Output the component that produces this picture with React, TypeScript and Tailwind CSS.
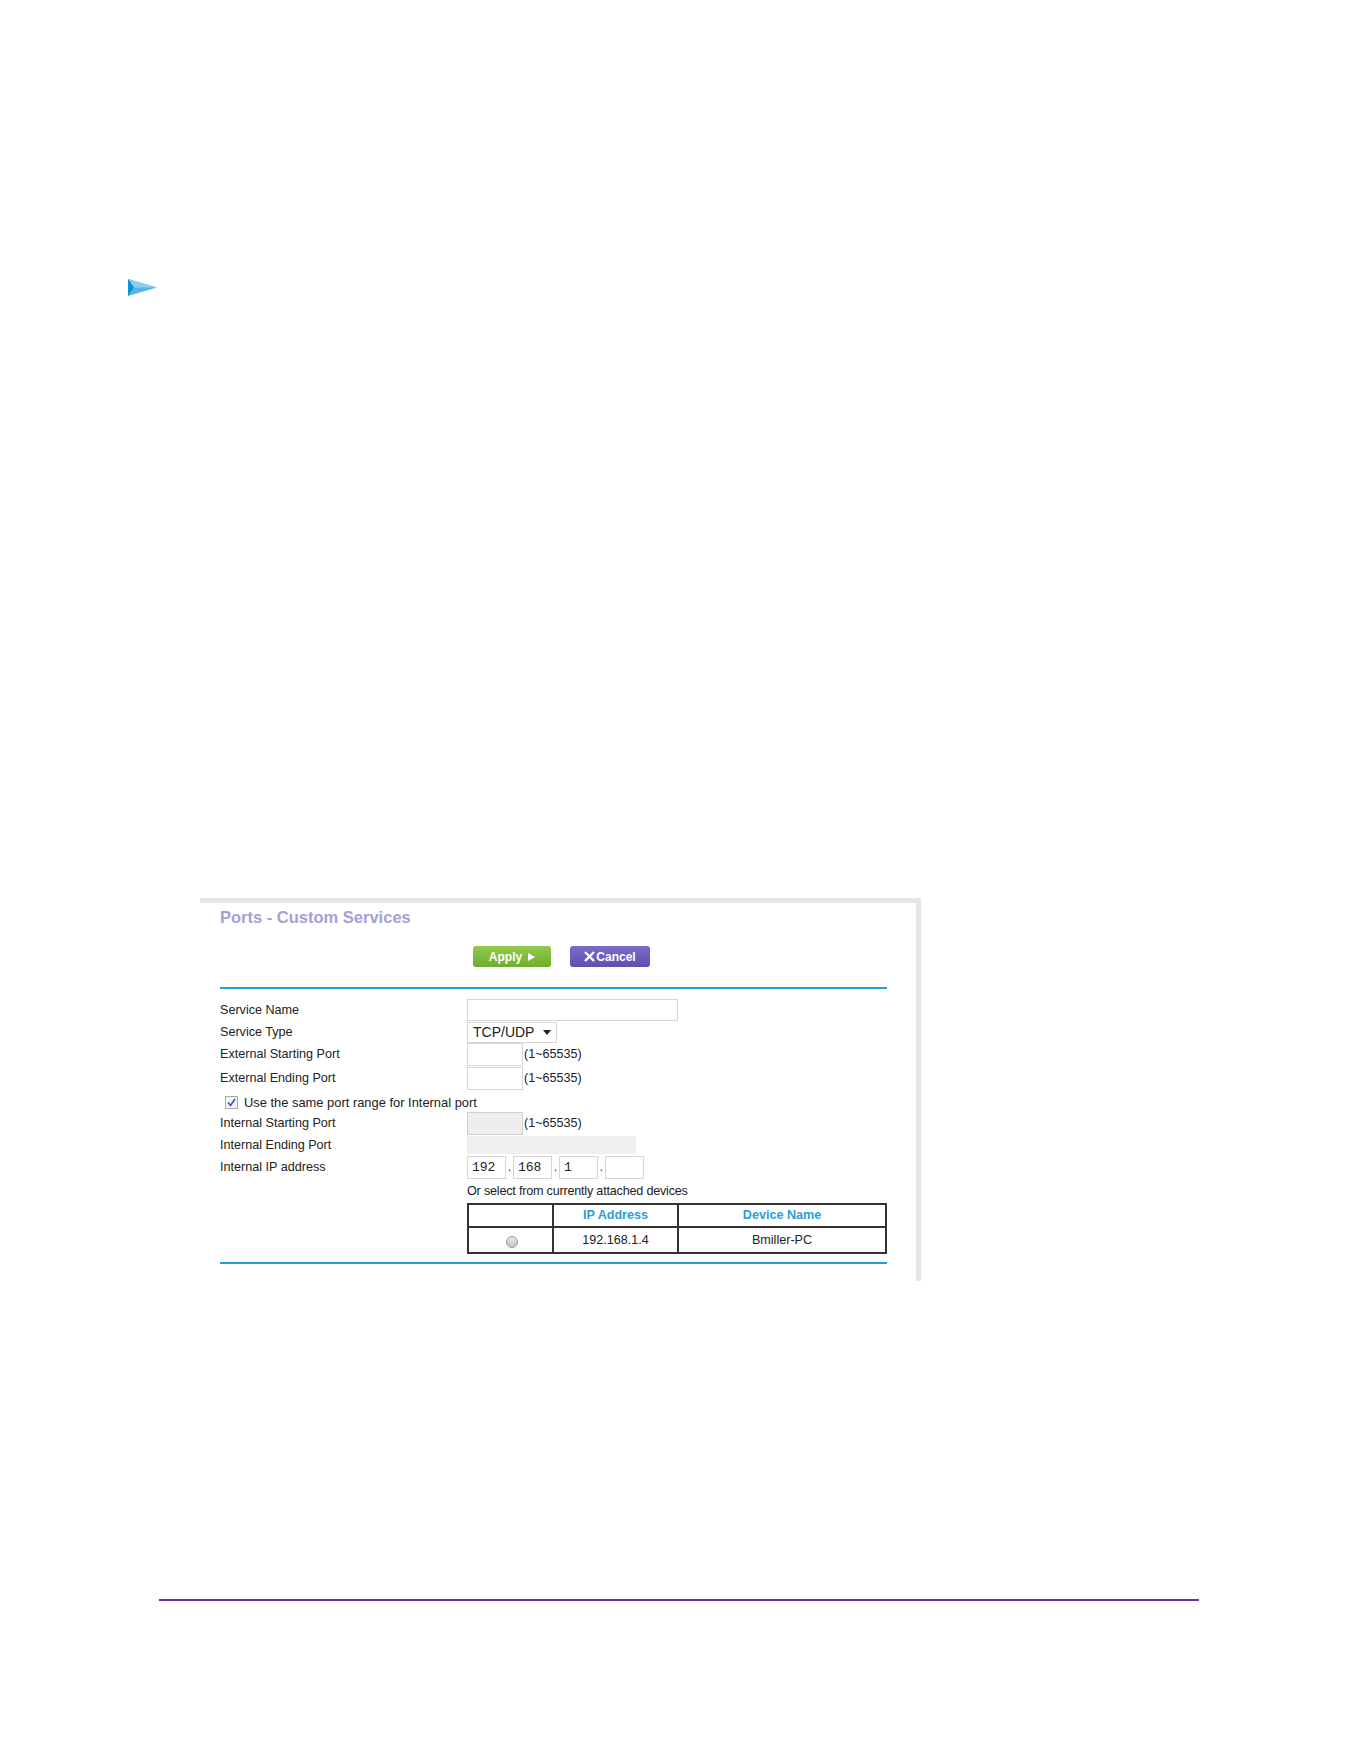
import React from 'react'

const sans = { fontFamily: '"Liberation Sans", Arial, sans-serif' }

// small step marker in the left margin
function StepArrow() {
  return (
    <svg width="29" height="17" viewBox="0 0 29 17">
      <polygon points="0,0 29,8.5 0,17" fill="#56b4e6" />
      <polygon points="0,0 29,8.5 6,8.5" fill="#8ccdf0" />
      <polygon points="0,0 6,8.5 0,17" fill="#0a94d6" />
    </svg>
  )
}

function Label({ children }: { children: React.ReactNode }) {
  return <div className="w-[247px] shrink-0 text-[12.6px] text-[#222]">{children}</div>
}

function Range() {
  return <span className="text-[12.6px] text-[#222] ml-px">(1~65535)</span>
}

function IpBox({ value }: { value?: string }) {
  return (
    <div
      className="w-[39px] h-[23px] border border-[#d6d6d6] pl-[4px] flex items-center text-[13px] text-[#222]"
      style={{ fontFamily: '"Liberation Mono", "Courier New", monospace' }}
    >
      {value}
    </div>
  )
}

function Dot() {
  return <span className="w-[7px] text-center text-[12px] text-[#222] self-end pb-[3px]">.</span>
}

export default function App() {
  return (
    <div className="w-[1361px] h-[1761px] bg-white" style={sans}>
      <div className="pt-[279px] pl-[128px] h-[296px]">
        <StepArrow />
      </div>

      {/* router admin panel */}
      <div className="ml-[200px] mt-[602px] w-[721px] h-[383px] border-t-[5px] border-r-[5px] border-[#e6e6e6] pl-[20px]">
        <h1 className="mt-[5px] text-[16.5px] leading-[19px] font-bold text-[#a59fd8]">
          Ports - Custom Services
        </h1>

        <div className="mt-[19px] ml-[253px] flex gap-[19px]">
          <button className="w-[78px] h-[21px] rounded-[3px] bg-gradient-to-b from-[#93cb4c] to-[#70ad2c] text-white text-[12px] font-bold flex items-center justify-center gap-[6px]">
            Apply
            <svg width="7" height="8" viewBox="0 0 7 8">
              <polygon points="0,0 7,4 0,8" fill="white" />
            </svg>
          </button>
          <button className="w-[80px] h-[21px] rounded-[3px] bg-gradient-to-b from-[#7a6cc8] to-[#5f50b0] text-white text-[12px] font-bold flex items-center justify-center gap-[1px]">
            <svg width="11" height="11" viewBox="0 0 11 11">
              <path d="M1 1 L10 10 M10 1 L1 10" stroke="white" strokeWidth="2.4" />
            </svg>
            Cancel
          </button>
        </div>

        <div className="mt-[20px] w-[667px] h-[2px] bg-[#1f9fd6]" />

        <div className="mt-[10px] flex flex-col">
          <div className="flex items-center h-[22px]">
            <Label>Service Name</Label>
            <div className="w-[211px] h-[22px] border border-[#d6d6d6]" />
          </div>
          <div className="flex items-center h-[21px] mt-px">
            <Label>Service Type</Label>
            <div className="w-[90px] h-[21px] border border-[#d6d6d6] flex items-center pl-[5px] text-[14px] text-[#222]">
              TCP/UDP
              <svg className="ml-[9px]" width="8" height="5" viewBox="0 0 8 5">
                <polygon points="0,0 8,0 4,5" fill="#222" />
              </svg>
            </div>
          </div>
          <div className="flex items-center h-[23px]">
            <Label>External Starting Port</Label>
            <div className="w-[56px] h-[23px] border border-[#d6d6d6]" />
            <Range />
          </div>
          <div className="flex items-center h-[23px] mt-px">
            <Label>External Ending Port</Label>
            <div className="w-[56px] h-[23px] border border-[#d6d6d6]" />
            <Range />
          </div>
          <div className="flex items-center h-[22px] pl-[5px] pt-[3px]">
            <svg width="13" height="13" viewBox="0 0 13 13">
              <rect x="0.5" y="0.5" width="12" height="12" fill="#f4f4f4" stroke="#a8a8a8" />
              <path d="M3 6.5 L5.5 9.5 L10 3" fill="none" stroke="#2c5fb3" strokeWidth="1.6" />
            </svg>
            <span className="ml-[6px] text-[12.9px] text-[#222]">Use the same port range for Internal port</span>
          </div>
          <div className="flex items-center h-[23px]">
            <Label>Internal Starting Port</Label>
            <div className="w-[56px] h-[23px] border border-[#cfcfcf] bg-[#eeeeee]" />
            <Range />
          </div>
          <div className="flex items-center h-[18px] mt-px">
            <Label>Internal Ending Port</Label>
            <div className="w-[169px] h-[18px] bg-[#efefef]" />
          </div>
          <div className="flex items-center h-[23px] mt-[2px]">
            <Label>Internal IP address</Label>
            <IpBox value="192" />
            <Dot />
            <IpBox value="168" />
            <Dot />
            <IpBox value="1" />
            <Dot />
            <IpBox />
          </div>
          <div className="flex items-center h-[24px]">
            <div className="w-[247px] shrink-0" />
            <span className="text-[12.6px] text-[#222] tracking-[-0.2px]">Or select from currently attached devices</span>
          </div>
          <div className="flex">
            <div className="w-[247px] shrink-0" />
            <table className="w-[420px] border-collapse border-2 border-[#333] text-[12.6px]">
              <thead>
                <tr className="h-[23px]">
                  <th className="w-[85px] border-2 border-[#333]" />
                  <th className="w-[125px] border-2 border-[#333] font-bold text-[#2a9fd8]">IP Address</th>
                  <th className="border-2 border-[#333] font-bold text-[#2a9fd8]">Device Name</th>
                </tr>
              </thead>
              <tbody>
                <tr className="h-[26px]">
                  <td className="border-2 border-[#333] text-center">
                    <span className="inline-block w-[12px] h-[12px] rounded-full border border-[#9a9a9a] bg-gradient-to-b from-[#e8e8e8] to-[#c4c4c4] align-middle mt-[3px] ml-[2px]" />
                  </td>
                  <td className="border-2 border-[#333] text-center text-[#222]">192.168.1.4</td>
                  <td className="border-2 border-[#333] text-center text-[#222]">Bmiller-PC</td>
                </tr>
              </tbody>
            </table>
          </div>
        </div>

        <div className="mt-[8px] w-[667px] h-[2px] bg-[#1f9fd6]" />
      </div>

      <div className="ml-[159px] mt-[318px] w-[1040px] h-[2px] bg-[#6b2fa2]" />
    </div>
  )
}
